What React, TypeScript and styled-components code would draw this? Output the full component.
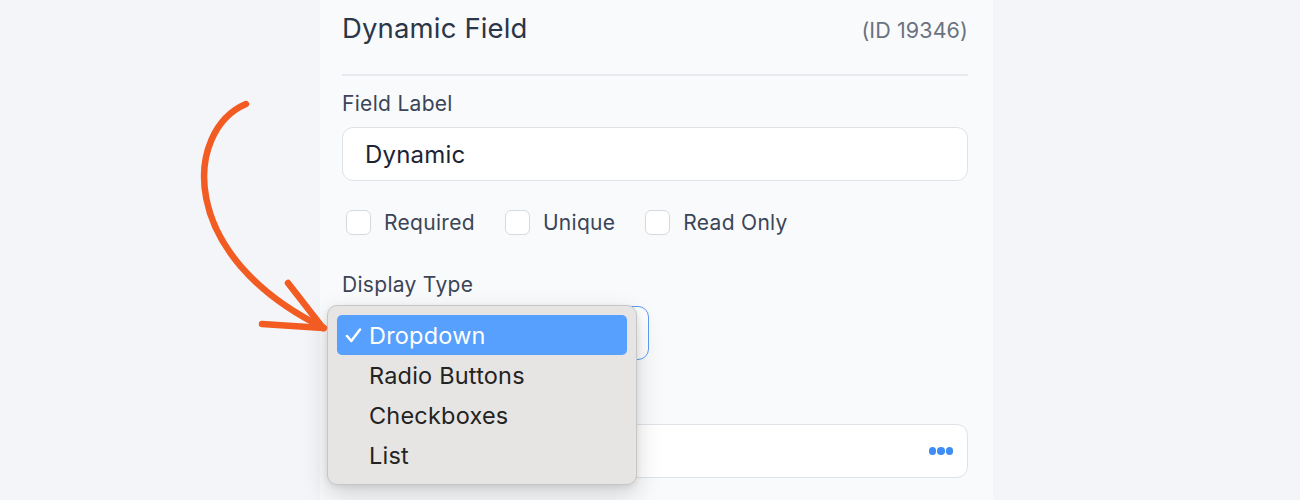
import React from "react";
import styled, { createGlobalStyle } from "styled-components";

const GlobalStyle = createGlobalStyle`
  html, body { margin: 0; padding: 0; }
  body {
    background: #f4f5f9;
    font-family: Inter, "Noto Sans", "Liberation Sans", sans-serif;
    -webkit-font-smoothing: antialiased;
  }
  * { box-sizing: border-box; }
`;

const Page = styled.div`
  position: relative;
  width: 1300px;
  height: 500px;
  overflow: hidden;
  background: #f4f5f9;
`;

const Panel = styled.div`
  margin-left: 320px;
  width: 673px;
  height: 500px;
  background: #f9fafc;
  padding: 0 25px 0 22px;
  display: flex;
  flex-direction: column;
`;

const Header = styled.div`
  display: flex;
  justify-content: space-between;
  align-items: baseline;
  padding-top: 10px;
  height: 76px;
  border-bottom: 2px solid #e7e9ee;
`;

const Title = styled.h1`
  margin: 0;
  font-size: 27.5px;
  line-height: 36px;
  font-weight: 400;
  color: #2b3648;
  letter-spacing: 0.15px;
`;

const IdText = styled.span`
  font-size: 21.5px;
  color: #6a7281;
  letter-spacing: 0.1px;
`;

const Label = styled.div<{ $top: number }>`
  margin-top: ${(p) => p.$top}px;
  height: 24px;
  font-size: 21px;
  line-height: 24px;
  color: #3b4557;
  letter-spacing: 0.3px;
`;

const TextInput = styled.div<{ $top: number; $width?: number; $focused?: boolean }>`
  position: relative;
  margin-top: ${(p) => p.$top}px;
  width: ${(p) => (p.$width ? `${p.$width}px` : "100%")};
  height: 54px;
  background: #ffffff;
  border: 1px solid ${(p) => (p.$focused ? "#5c9cf5" : "#dfe2e7")};
  border-radius: 11px;
  display: flex;
  align-items: center;
  justify-content: space-between;
  padding: 0 14px 0 22px;
  font-size: 24px;
  letter-spacing: 0.2px;
  color: #1c2433;
`;

const CheckRow = styled.div`
  margin-top: 28px;
  display: flex;
  align-items: center;
  height: 26px;
  padding-left: 4px;
`;

const CheckItem = styled.label`
  display: flex;
  align-items: center;
  gap: 13px;
  margin-right: 30px;
  font-size: 21px;
  letter-spacing: 0.3px;
  color: #3b4557;
`;

const Box = styled.span`
  width: 25px;
  height: 25px;
  border: 1px solid #d6d9df;
  border-radius: 6px;
  background: #ffffff;
`;

const Dots = styled.div`
  display: flex;
  gap: 1px;
`;

const Dot = styled.span`
  width: 7.5px;
  height: 7.5px;
  border-radius: 50%;
  background: #3d8df5;
`;

const Menu = styled.div`
  position: absolute;
  left: -16px;
  top: -2px;
  width: 310px;
  padding: 9px;
  background: #e6e5e3;
  border: 1px solid #c6c6c6;
  border-radius: 10px;
  box-shadow: 0 10px 26px rgba(0, 0, 0, 0.16), 0 2px 6px rgba(0, 0, 0, 0.08);
  z-index: 5;
`;

const MenuItem = styled.div<{ $active?: boolean }>`
  height: 40px;
  display: flex;
  align-items: center;
  padding-left: 8px;
  border-radius: 5px;
  font-size: 23.5px;
  letter-spacing: 0.2px;
  color: ${(p) => (p.$active ? "#ffffff" : "#232323")};
  background: ${(p) => (p.$active ? "#57a0fd" : "transparent")};
`;

const CheckSlot = styled.span`
  width: 24px;
  height: 20px;
  display: flex;
  align-items: center;
`;

const ArrowSvg = styled.svg`
  position: absolute;
  left: 0;
  top: 0;
  z-index: 6;
  pointer-events: none;
`;

const options = ["Dropdown", "Radio Buttons", "Checkboxes", "List"];

export default function App() {
  return (
    <Page>
      <GlobalStyle />
      <Panel>
        <Header>
          <Title>Dynamic Field</Title>
          <IdText>(ID 19346)</IdText>
        </Header>
        <Label $top={16}>Field Label</Label>
        <TextInput $top={11}>Dynamic</TextInput>
        <CheckRow>
          <CheckItem>
            <Box />
            Required
          </CheckItem>
          <CheckItem>
            <Box />
            Unique
          </CheckItem>
          <CheckItem>
            <Box />
            Read Only
          </CheckItem>
        </CheckRow>
        <Label $top={38}>Display Type</Label>
        <TextInput $top={9} $width={307} $focused>
          <Menu>
            {options.map((o, i) => (
              <MenuItem key={o} $active={i === 0}>
                <CheckSlot>
                  {i === 0 && (
                    <svg width="17" height="15" viewBox="0 0 17 15">
                      <path
                        d="M2 8 L6.3 13 L15 1.5"
                        fill="none"
                        stroke="#ffffff"
                        strokeWidth="2.5"
                        strokeLinecap="round"
                        strokeLinejoin="round"
                      />
                    </svg>
                  )}
                </CheckSlot>
                {o}
              </MenuItem>
            ))}
          </Menu>
        </TextInput>
        <Label $top={29} />
        <TextInput $top={11}>
          <span />
          <Dots>
            <Dot />
            <Dot />
            <Dot />
          </Dots>
        </TextInput>
      </Panel>
      <ArrowSvg width="340" height="340" viewBox="0 0 340 340">
        <g
          fill="none"
          stroke="#f25c23"
          strokeWidth="6.5"
          strokeLinecap="round"
          strokeLinejoin="round"
        >
          <path d="M246 104 C185 130 175 255 324 328" />
          <path d="M288 283 L323 328" />
          <path d="M262 324 L323 328" />
        </g>
      </ArrowSvg>
    </Page>
  );
}
